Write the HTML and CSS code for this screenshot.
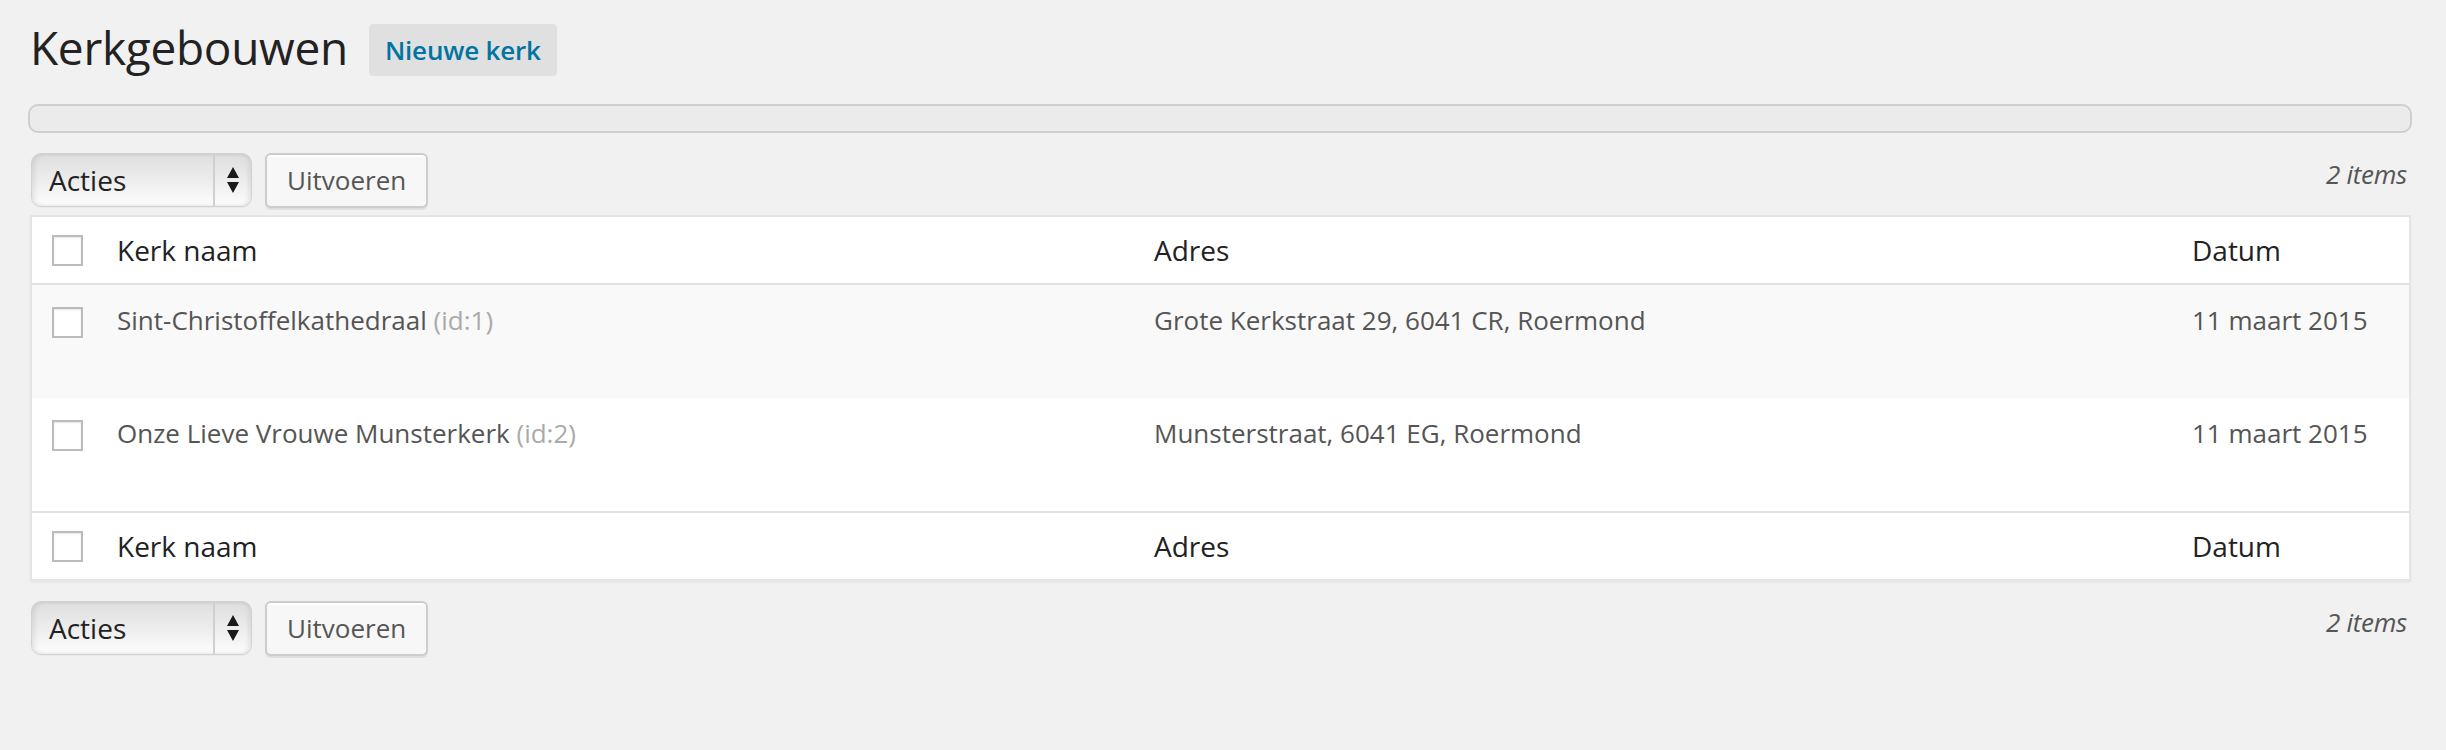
FILE: index.html
```html
<!DOCTYPE html>
<html lang="nl">
<head>
<meta charset="utf-8">
<title>Kerkgebouwen</title>
<link rel="stylesheet" href="styles.css">
</head>
<body>
<div class="wrap">
  <div class="page-head">
    <h1 class="page-title">Kerkgebouwen</h1>
    <a class="add-new" href="#">Nieuwe kerk</a>
  </div>

  <div class="empty-bar"></div>

  <div class="tablenav">
    <div class="select">
      <span class="select-label">Acties</span>
      <span class="select-arrows">
        <svg width="12" height="26" viewBox="0 0 12 26"><path d="M6 0 L12 11 L0 11 Z M0 15 L12 15 L6 26 Z" fill="#1a1a1a"/></svg>
      </span>
    </div>
    <button class="button">Uitvoeren</button>
    <span class="displaying-num">2 items</span>
  </div>

  <table class="list-table">
    <colgroup>
      <col class="col-check">
      <col class="col-name">
      <col class="col-adres">
      <col class="col-datum">
    </colgroup>
    <thead>
      <tr>
        <th class="check-column"><input type="checkbox" class="cb"></th>
        <th>Kerk naam</th>
        <th>Adres</th>
        <th>Datum</th>
      </tr>
    </thead>
    <tbody>
      <tr class="alternate">
        <td class="check-column"><input type="checkbox" class="cb"></td>
        <td>Sint-Christoffelkathedraal <span class="id">(id:1)</span><div class="row-actions"></div></td>
        <td>Grote Kerkstraat 29, 6041 CR, Roermond</td>
        <td>11 maart 2015</td>
      </tr>
      <tr>
        <td class="check-column"><input type="checkbox" class="cb"></td>
        <td>Onze Lieve Vrouwe Munsterkerk <span class="id">(id:2)</span><div class="row-actions"></div></td>
        <td>Munsterstraat, 6041 EG, Roermond</td>
        <td>11 maart 2015</td>
      </tr>
    </tbody>
    <tfoot>
      <tr>
        <th class="check-column"><input type="checkbox" class="cb"></th>
        <th>Kerk naam</th>
        <th>Adres</th>
        <th>Datum</th>
      </tr>
    </tfoot>
  </table>

  <div class="tablenav bottom">
    <div class="select">
      <span class="select-label">Acties</span>
      <span class="select-arrows">
        <svg width="12" height="26" viewBox="0 0 12 26"><path d="M6 0 L12 11 L0 11 Z M0 15 L12 15 L6 26 Z" fill="#1a1a1a"/></svg>
      </span>
    </div>
    <button class="button">Uitvoeren</button>
    <span class="displaying-num">2 items</span>
  </div>
</div>
</body>
</html>
```

FILE: styles.css
```css
html, body {
  margin: 0;
  padding: 0;
  background: #f1f1f1;
}
body {
  font-family: "Open Sans", "Noto Sans", sans-serif;
  color: #444;
}
.wrap {
  padding: 18px 35px 0 30px;
}
.page-head {
  display: flex;
  align-items: flex-start;
}
.page-title {
  margin: 0;
  font-size: 46px;
  font-weight: 400;
  line-height: 58px;
  letter-spacing: -0.3px;
  color: #222;
}
.add-new {
  margin: 6px 0 0 21px;
  padding: 8px 16px;
  font-size: 26px;
  font-weight: 600;
  line-height: 36px;
  letter-spacing: -0.2px;
  color: #0074a2;
  background: #e0e0e0;
  border-radius: 4px;
  text-decoration: none;
}
.empty-bar {
  margin: 28px -1px 0 -2px;
  height: 29px;
  box-sizing: border-box;
  border: 2px solid #cfcfcf;
  border-radius: 10px;
  background: #ebebeb;
}
.tablenav {
  display: flex;
  align-items: flex-start;
  margin-top: 20px;
  height: 62px;
}
.tablenav.bottom {
  margin-top: 20px;
}
.select {
  display: flex;
  width: 221px;
  height: 54px;
  box-sizing: border-box;
  margin-left: 1px;
  border: 1px solid #d2d2d2;
  border-radius: 10px;
  background: linear-gradient(#dedede, #eeeeee 55%, #fdfdfd);
  box-shadow: inset 3px 0 4px rgba(0,0,0,0.07), inset -3px 0 4px rgba(0,0,0,0.07), 0 1px 1px rgba(0,0,0,0.04);
}
.select-label {
  flex: 1;
  display: flex;
  align-items: center;
  padding-left: 17px;
  font-size: 28px;
  color: #222;
  border-right: 2px solid #d0d0d0;
}
.select-arrows {
  width: 36px;
  display: flex;
  align-items: center;
  justify-content: center;
}
.button {
  margin-left: 13px;
  height: 55px;
  box-sizing: border-box;
  padding: 0 20px 2px;
  font-family: "Open Sans", "Noto Sans", sans-serif;
  font-size: 26px;
  line-height: 50px;
  color: #555;
  background: #f7f7f7;
  border: 2px solid #cccccc;
  border-radius: 6px;
  box-shadow: inset 0 2px 0 #fff, 0 2px 0 rgba(0,0,0,0.08);
}
.displaying-num {
  margin-left: auto;
  margin-top: 3px;
  margin-right: 4px;
  font-size: 26px;
  line-height: 36px;
  font-style: italic;
  letter-spacing: -0.3px;
  color: #555;
}
.list-table {
  width: 2381px;
  border-spacing: 0;
  table-layout: fixed;
  background: #fff;
  border: 2px solid #e5e5e5;
  box-shadow: 0 2px 2px rgba(0,0,0,0.04);
}
.col-check { width: 65px; }
.col-name { width: 1037px; }
.col-adres { width: 1038px; }
.list-table th {
  text-align: left;
  font-weight: 400;
  font-size: 28px;
  line-height: 38px;
  padding: 14px 20px;
  color: #222;
}
.list-table thead th {
  border-bottom: 2px solid #e1e1e1;
}
.list-table tfoot th {
  border-top: 2px solid #e1e1e1;
}
.list-table td {
  vertical-align: top;
  font-size: 26px;
  line-height: 39px;
  padding: 16px 20px;
  color: #555;
}
.list-table tr.alternate td {
  background: #f9f9f9;
}
.list-table .check-column {
  padding: 18px 0 0 20px;
  vertical-align: top;
  line-height: 0;
}
.list-table td.check-column {
  padding-top: 22px;
}
.id {
  color: #aaa;
}
.row-actions {
  height: 42px;
}
.cb {
  -webkit-appearance: none;
  appearance: none;
  display: block;
  margin: 0;
  width: 31px;
  height: 31px;
  box-sizing: border-box;
  border: 2px solid #bbb;
  background: #fff;
  box-shadow: inset 0 1px 2px rgba(0,0,0,0.1);
}
```
